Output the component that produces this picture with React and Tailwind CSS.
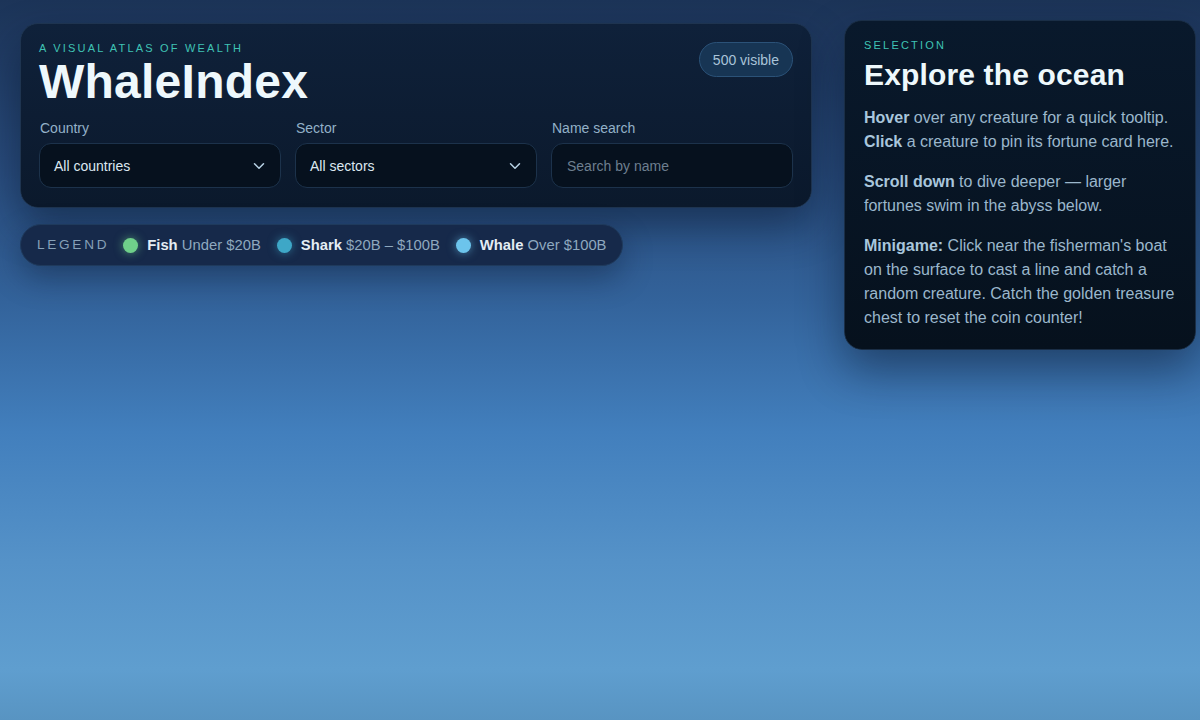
import React from "react";

function Chevron() {
  return (
    <svg width="18" height="18" viewBox="0 0 24 24" fill="none" stroke="#b8d3e6" strokeWidth="2" strokeLinecap="round" strokeLinejoin="round">
      <path d="M6 9l6 6 6-6" />
    </svg>
  );
}

function Field({ label, children }) {
  return (
    <div className="flex flex-col gap-[7px]">
      <div className="text-[14px] leading-[16px] text-[#93b1c8] pl-[1px]">{label}</div>
      {children}
    </div>
  );
}

function Select({ value }) {
  return (
    <div className="h-[45px] rounded-[12px] border border-[#1c324b] bg-[#06111e] flex items-center justify-between pl-[14px] pr-[12px] text-[14px] text-[#dce8f1]">
      <span className="mt-[1px]">{value}</span>
      <Chevron />
    </div>
  );
}

function LegendItem({ color, glow, name, range }) {
  return (
    <div className="flex items-center gap-[9px]">
      <span className={`w-[15px] h-[15px] rounded-full ${color} ${glow}`} />
      <span className="text-[14.8px]">
        <span className="font-bold text-[#e4edf4]">{name}</span>{" "}
        <span className="text-[#8ea8bf]">{range}</span>
      </span>
    </div>
  );
}

export default function App() {
  return (
    <div
      className="w-[1200px] h-[720px] overflow-hidden relative bg-[linear-gradient(180deg,#1c3458_0%,#284a7a_22%,#33639b_42%,#427fbd_60%,#5592c8_78%,#5f9ecf_93%,#5894c2_100%)]"
      style={{ fontFamily: '"Liberation Sans", Arial, sans-serif' }}
    >
      <div className="flex justify-between items-start pl-[20px] pr-[4px] pt-[20px]">
        <div className="flex flex-col gap-[16px] pt-[3px]">
          <div className="w-[792px] rounded-[18px] border border-[#1e3450] bg-[linear-gradient(180deg,#0f213a_0%,#0b192c_100%)] shadow-[0_18px_40px_rgba(5,15,35,0.45)] pt-[17px] pb-[19px] pl-[18px] pr-[18px]">
            <div className="flex justify-between items-start">
              <div>
                <div className="text-[11px] leading-[14px] tracking-[0.2em] text-[#3fc3b4]">A VISUAL ATLAS OF WEALTH</div>
                <div className="text-[48px] leading-[52px] font-bold tracking-[0.005em] text-[#eef8fc] mt-[1px]">WhaleIndex</div>
              </div>
              <div className="mt-[1px] h-[35px] px-[13px] rounded-full border border-[#2b5278] bg-[#173554] flex items-center text-[14px] text-[#a9c4d9]">
                <span className="mt-[1px]">500 visible</span>
              </div>
            </div>
            <div className="grid grid-cols-3 gap-[14px] mt-[12px]">
              <Field label="Country">
                <Select value="All countries" />
              </Field>
              <Field label="Sector">
                <Select value="All sectors" />
              </Field>
              <Field label="Name search">
                <div className="h-[45px] rounded-[12px] border border-[#1c324b] bg-[#06111e] flex items-center pl-[15px] text-[14px] text-[#6d7f8f]">
                  <span className="mt-[1px]">Search by name</span>
                </div>
              </Field>
            </div>
          </div>
          <div className="self-start h-[42px] rounded-full border border-[#1f3a5c] bg-[#16294a] shadow-[0_12px_30px_rgba(5,15,35,0.35)] flex items-center gap-[16px] pl-[16px] pr-[16px]">
            <span className="text-[13.6px] tracking-[0.2em] text-[#86a0b8] mr-[-2px]">LEGEND</span>
            <LegendItem color="bg-[#6fd08a]" glow="shadow-[0_0_10px_rgba(111,208,138,0.6)]" name="Fish" range="Under $20B" />
            <LegendItem color="bg-[#3ea7c7]" glow="shadow-[0_0_10px_rgba(62,167,199,0.6)]" name="Shark" range="$20B – $100B" />
            <LegendItem color="bg-[#6cc4ec]" glow="shadow-[0_0_10px_rgba(108,196,236,0.6)]" name="Whale" range="Over $100B" />
          </div>
        </div>
        <div className="w-[352px] rounded-[18px] border border-[#1a2e46] bg-[linear-gradient(180deg,#09192c_0%,#06111d_100%)] shadow-[0_20px_45px_rgba(5,15,35,0.45)] pt-[17px] pb-[19px] px-[19px]">
          <div className="text-[11px] leading-[14px] tracking-[0.2em] text-[#3fc3b4]">SELECTION</div>
          <div className="text-[30px] leading-[36px] font-bold tracking-[0.005em] text-[#eef8fc] mt-[5px]">Explore the ocean</div>
          <div className="text-[16px] leading-[24px] text-[#9bb7cc] mt-[13px] flex flex-col gap-[16px]">
            <p>
              <b className="text-[#a9c6dc]">Hover</b> over any creature for a quick tooltip.{" "}
              <b className="text-[#a9c6dc]">Click</b> a creature to pin its fortune card here.
            </p>
            <p>
              <b className="text-[#a9c6dc]">Scroll down</b> to dive deeper — larger fortunes swim in the abyss below.
            </p>
            <p>
              <b className="text-[#a9c6dc]">Minigame:</b> Click near the fisherman's boat on the surface to cast a line and catch a random creature. Catch the golden treasure chest to reset the coin counter!
            </p>
          </div>
        </div>
      </div>
    </div>
  );
}
